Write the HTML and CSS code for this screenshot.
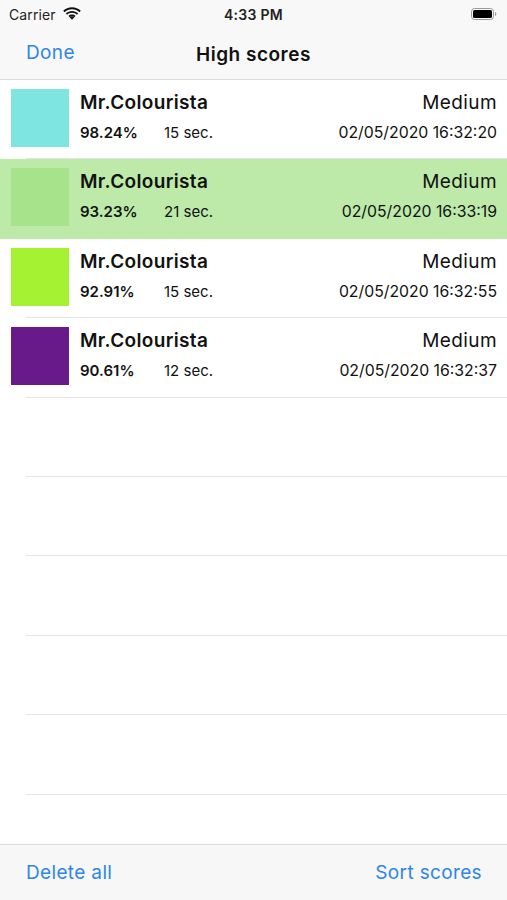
FILE: index.html
```html
<!DOCTYPE html>
<html>
<head>
<meta charset="utf-8">
<link rel="stylesheet" href="styles.css">
</head>
<body>
<div class="screen">
  <div class="status">
    <div class="status-left">
      <span class="carrier">Carrier</span>
      <svg class="wifi" width="18" height="13" viewBox="0 0 18 13">
        <path d="M9 2.2c2.9 0 5.5 1.1 7.5 3l1.3-1.4C15.5 1.6 12.4.3 9 .3S2.5 1.6.2 3.8l1.3 1.4c2-1.9 4.6-3 7.5-3z" fill="#111"/>
        <path d="M9 5.8c1.9 0 3.6.7 4.9 1.9l1.3-1.4C13.6 4.8 11.4 3.9 9 3.9S4.4 4.8 2.8 6.3l1.3 1.4C5.4 6.5 7.1 5.8 9 5.8z" fill="#111"/>
        <path d="M9 9.3c.9 0 1.7.3 2.3.9L9 12.7 6.7 10.2c.6-.6 1.4-.9 2.3-.9z" fill="#111"/>
        <path d="M9 7.6c1.4 0 2.6.5 3.5 1.3l-1.2 1.3C10.7 9.6 9.9 9.3 9 9.3s-1.7.3-2.3.9L5.5 8.9C6.4 8.1 7.6 7.6 9 7.6z" fill="#111"/>
      </svg>
    </div>
    <div class="time">4:33 PM</div>
    <div class="status-right">
      <svg class="battery" width="26" height="12" viewBox="0 0 26 12">
        <rect x="0.5" y="0.5" width="22" height="11" rx="3" fill="none" stroke="#999" stroke-width="1"/>
        <rect x="2" y="2" width="19" height="8" rx="1.6" fill="#000"/>
        <path d="M24 4v4c.8-.3 1.3-1.1 1.3-2S24.8 4.3 24 4z" fill="#999"/>
      </svg>
    </div>
  </div>
  <div class="navbar">
    <span class="nav-btn">Done</span>
    <span class="nav-title">High scores</span>
  </div>
  <div class="list">
    <div class="row">
      <div class="swatch" style="background:#7ee5e0"></div>
      <div class="info">
        <div class="line1"><span class="name">Mr.Colourista</span><span class="level">Medium</span></div>
        <div class="line2"><span class="pct">98.24%</span><span class="sec">15 sec.</span><span class="date">02/05/2020 16:32:20</span></div>
      </div>
    </div>
    <div class="row selected">
      <div class="swatch" style="background:#a6e38b"></div>
      <div class="info">
        <div class="line1"><span class="name">Mr.Colourista</span><span class="level">Medium</span></div>
        <div class="line2"><span class="pct">93.23%</span><span class="sec">21 sec.</span><span class="date">02/05/2020 16:33:19</span></div>
      </div>
    </div>
    <div class="row">
      <div class="swatch" style="background:#a4f232"></div>
      <div class="info">
        <div class="line1"><span class="name">Mr.Colourista</span><span class="level">Medium</span></div>
        <div class="line2"><span class="pct">92.91%</span><span class="sec">15 sec.</span><span class="date">02/05/2020 16:32:55</span></div>
      </div>
    </div>
    <div class="row">
      <div class="swatch" style="background:#681a8a"></div>
      <div class="info">
        <div class="line1"><span class="name">Mr.Colourista</span><span class="level">Medium</span></div>
        <div class="line2"><span class="pct">90.61%</span><span class="sec">12 sec.</span><span class="date">02/05/2020 16:32:37</span></div>
      </div>
    </div>
    <div class="row empty"></div>
    <div class="row empty"></div>
    <div class="row empty"></div>
    <div class="row empty"></div>
    <div class="row empty"></div>
  </div>
  <div class="toolbar">
    <span class="nav-btn">Delete all</span>
    <span class="nav-btn">Sort scores</span>
  </div>
</div>
</body>
</html>
```
FILE: styles.css
```css
html, body {
  margin: 0;
  padding: 0;
  background: #fff;
}
body {
  font-family: Inter, "Liberation Sans", "Noto Sans", Arial, sans-serif;
  color: #111;
}
.screen {
  width: 507px;
  height: 900px;
  display: flex;
  flex-direction: column;
  overflow: hidden;
}
.status {
  height: 28px;
  background: #f8f8f8;
  display: grid;
  grid-template-columns: 1fr auto 1fr;
  align-items: center;
  padding: 0 9px;
}
.status-left {
  display: flex;
  align-items: center;
  gap: 7px;
}
.carrier {
  font-size: 14px;
  color: #222;
  letter-spacing: 0.1px;
}
.wifi {
  margin-top: -1px;
}
.time {
  font-size: 14px;
  font-weight: 600;
  color: #222;
  letter-spacing: 0.3px;
}
.status-right {
  display: flex;
  justify-content: flex-end;
  padding-right: 1px;
}
.navbar {
  height: 51px;
  background: #f8f8f8;
  border-bottom: 1px solid #dcdcdc;
  display: flex;
  align-items: center;
  justify-content: center;
  position: relative;
}
.navbar .nav-btn {
  position: absolute;
  left: 26px;
  top: 13px;
}
.nav-btn {
  font-size: 19px;
  color: #2d86e6;
  letter-spacing: 0.35px;
}
.nav-title {
  font-size: 19px;
  font-weight: 600;
  color: #111;
  margin-top: 1px;
  letter-spacing: 0.5px;
}
.list {
  flex: 1;
  display: flex;
  flex-direction: column;
}
.row {
  height: 79.4px;
  box-sizing: border-box;
  flex: none;
  display: flex;
  align-items: flex-start;
  padding: 9px 10px 0 11px;
  position: relative;
}
.row::after {
  content: "";
  position: absolute;
  left: 26px;
  right: 0;
  bottom: 0;
  height: 1px;
  background: #e4e4e4;
}
.row.selected {
  background: #bde9a9;
}
.row.selected::after {
  display: none;
}
.swatch {
  width: 58px;
  height: 58px;
  flex: none;
}
.info {
  flex: 1;
  margin-left: 11px;
  margin-top: 2px;
  display: flex;
  flex-direction: column;
}
.line1 {
  display: flex;
  justify-content: space-between;
  align-items: baseline;
  height: 25px;
}
.name {
  font-size: 19px;
  font-weight: 600;
  letter-spacing: 0.35px;
}
.level {
  font-size: 19px;
  letter-spacing: 0.4px;
}
.line2 {
  display: flex;
  align-items: baseline;
  margin-top: 7px;
}
.pct {
  font-size: 15px;
  font-weight: 600;
  width: 84px;
}
.sec {
  font-size: 15px;
}
.date {
  margin-left: auto;
  font-size: 15.8px;
}
.toolbar {
  height: 55px;
  background: #f7f7f7;
  border-top: 1px solid #dcdcdc;
  display: flex;
  align-items: center;
  justify-content: space-between;
  padding: 0 25px 0 26px;
}
```
